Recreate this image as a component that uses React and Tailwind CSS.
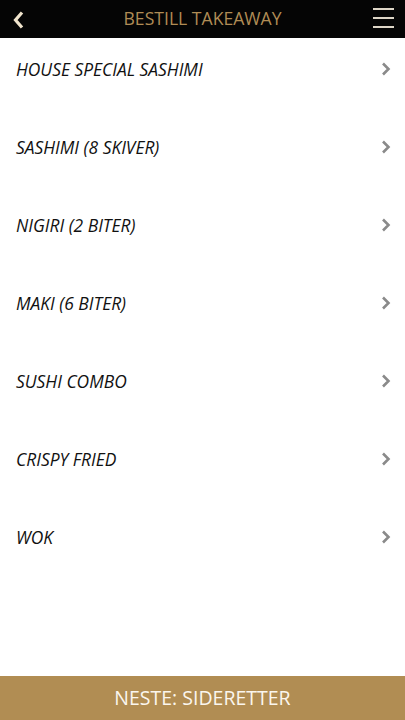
import React from 'react';

const categories = [
  'HOUSE SPECIAL SASHIMI',
  'SASHIMI (8 SKIVER)',
  'NIGIRI (2 BITER)',
  'MAKI (6 BITER)',
  'SUSHI COMBO',
  'CRISPY FRIED',
  'WOK',
];

const ChevronRight = () => (
  <svg width="10" height="14" viewBox="0 0 10 14" fill="none">
    <path d="M2 1.5 L7.5 7 L2 12.5" stroke="#8a8a8a" strokeWidth="2.6" />
  </svg>
);

const App = () => {
  return (
    <div
      className="flex flex-col h-[720px] w-full bg-white"
      style={{ fontFamily: '"Open Sans", sans-serif' }}
    >
      {/* Header */}
      <div className="relative flex items-center justify-center h-[38px] bg-[#050505] shrink-0">
        <button className="absolute left-[12px] top-[10px]">
          <svg width="14" height="20" viewBox="0 0 14 20" fill="none">
            <path d="M10 2.5 L3.5 10 L10 17.5" stroke="#f0e4cc" strokeWidth="3.2" />
          </svg>
        </button>
        <h1 className="text-[17.6px] leading-none text-[#b08c55]">BESTILL TAKEAWAY</h1>
        <button className="absolute right-[11px] top-[8px] flex flex-col gap-[7.5px]">
          <span className="block w-[21px] h-[1.5px] bg-[#ddd5c6]" />
          <span className="block w-[21px] h-[1.5px] bg-[#ddd5c6]" />
          <span className="block w-[21px] h-[1.5px] bg-[#ddd5c6]" />
        </button>
      </div>

      {/* Category list */}
      <div className="flex-1">
        {categories.map((name) => (
          <div key={name} className="flex items-start justify-between h-[78px] pt-[20px] pl-[16px] pr-[14px]">
            <span className="text-[17.4px] leading-[22px] italic text-[#111]">{name}</span>
            <span className="pt-[4px]">
              <ChevronRight />
            </span>
          </div>
        ))}
      </div>

      {/* Next button */}
      <div className="flex items-center justify-center h-[44px] bg-[#b18d53] shrink-0">
        <span className="text-[19.5px] text-[#fbf6ee]">NESTE: SIDERETTER</span>
      </div>
    </div>
  );
};

export default App;
